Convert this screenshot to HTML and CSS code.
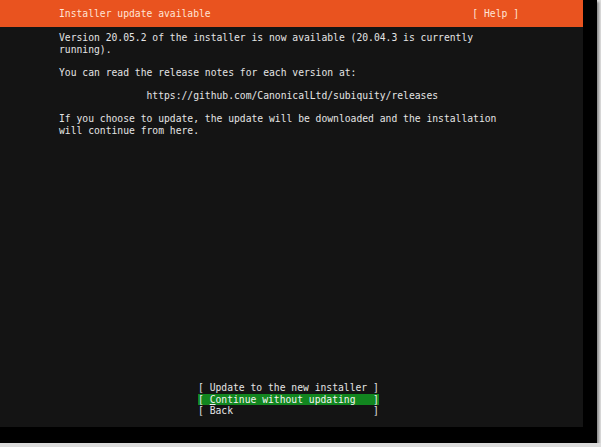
FILE: index.html
```html
<!DOCTYPE html>
<html lang="en">
<head>
    <meta charset="UTF-8">
    <meta name="viewport" content="width=device-width, initial-scale=1.0">
    <title>Installer update available</title>
    <link rel="stylesheet" href="styles.css">
</head>
<body>
    <div class="frame">
        <div class="screen">
            <div class="header">
                <span class="title">Installer update available</span>
                <span class="help">[ Help ]</span>
            </div>

            <div class="content">
                <p>Version 20.05.2 of the installer is now available (20.04.3 is currently
running).</p>
                <p>You can read the release notes for each version at:</p>
                <p class="url">https://github.com/CanonicalLtd/subiquity/releases</p>
                <p>If you choose to update, the update will be downloaded and the installation
will continue from here.</p>
            </div>

            <div class="buttons">
                <div class="button">[ Update to the new installer ]</div>
                <div class="button selected">[ <span class="cursor">C</span>ontinue without updating   ]</div>
                <div class="button">[ Back                        ]</div>
            </div>
        </div>
    </div>
</body>
</html>
```

FILE: styles.css
```css
body {
    margin: 0;
    background-color: #dcdcdc;
    font-family: 'DejaVu Sans Mono', 'Liberation Mono', monospace;
    font-size: 9.7px;
    line-height: 11.6px;
    color: #e4e4e4;
}
.frame {
    width: 597px;
    height: 443px;
    background-color: #000;
    box-shadow: 2px 2px 2px rgba(0, 0, 0, 0.35);
}
.screen {
    width: 583px;
    height: 427px;
    background-color: #141414;
    display: flex;
    flex-direction: column;
}
.header {
    height: 27px;
    background-color: #e9531f;
    color: #ffe4d6;
    display: flex;
    align-items: center;
    padding-left: 59px;
    padding-right: 64px;
}
.help {
    margin-left: auto;
}
.content {
    flex-grow: 1;
    padding: 5px 0 0 59px;
}
.content p {
    margin: 0 0 11.6px 0;
    white-space: pre;
}
.url {
    padding-left: 15ch;
}
.buttons {
    padding: 0 0 10px 198px;
}
.button {
    width: max-content;
    white-space: pre;
}
.selected {
    background-color: #12861f;
    color: #f4f4f4;
}
.cursor {
    text-decoration: underline;
}
```
